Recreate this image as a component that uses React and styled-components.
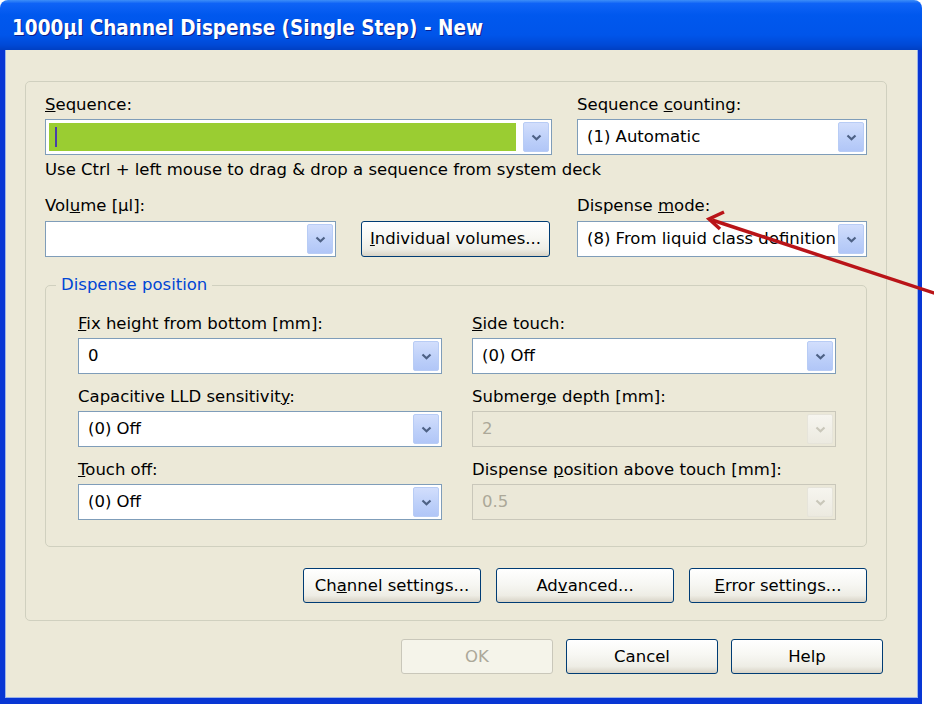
import React from "react";
import styled, { createGlobalStyle } from "styled-components";

const GlobalStyle = createGlobalStyle`
  html, body {
    margin: 0;
    padding: 0;
    background: #ffffff;
  }
  body {
    font-family: "DejaVu Sans", "Liberation Sans", sans-serif;
    font-size: 16.5px;
    color: #000;
  }
`;

const Page = styled.div`
  position: relative;
  display: flex;
  width: 934px;
  height: 704px;
  background: #fff;
  overflow: hidden;
`;

const Window = styled.div`
  width: 922px;
  height: 704px;
  display: flex;
  flex-direction: column;
  border-radius: 8px 8px 0 0;
  overflow: hidden;
`;

const TitleBar = styled.div`
  flex: none;
  height: 50px;
  display: flex;
  align-items: center;
  padding-left: 12px;
  background: linear-gradient(
    to bottom,
    #3d8ef8 0%,
    #0f63f6 7%,
    #0058ee 30%,
    #0055ea 70%,
    #0049d6 90%,
    #003fc2 100%
  );
`;

const Title = styled.div`
  color: #fff;
  font-family: "DejaVu Sans Condensed", "DejaVu Sans", sans-serif;
  font-weight: bold;
  font-size: 20.5px;
  text-shadow: 1px 1px 0 #0a1e8c;
  padding-top: 6px;
`;

const Body = styled.div`
  flex: 1;
  display: flex;
  flex-direction: column;
  background: #ece9d8;
  border-style: solid;
  border-color: #0836d4;
  border-width: 0 4px 6px 5px;
  box-shadow: inset 1px 0 0 #9bb4ea, inset -1px 0 0 #9bb4ea, inset 0 -1px 0 #9bb4ea;
  padding: 31px 31px 0 20px;
`;

const GroupBox = styled.div`
  border: 1px solid #d0d0bf;
  border-radius: 5px;
  padding: 13px 19px 17px 19px;
`;

const TopGrid = styled.div`
  display: grid;
  grid-template-columns: 507px 290px;
  column-gap: 25px;
`;

const Field = styled.div`
  display: flex;
  flex-direction: column;
  gap: ${(p) => p.$gap || 4}px;
`;

const Label = styled.div`
  line-height: 20px;
  white-space: nowrap;
`;

const Hint = styled.div`
  grid-column: 1 / -1;
  line-height: 20px;
  margin: 5px 0 16px;
  white-space: nowrap;
`;

const Combo = styled.div`
  box-sizing: border-box;
  width: ${(p) => (p.$width ? `${p.$width}px` : "100%")};
  height: 36px;
  display: flex;
  align-items: center;
  border: 1px solid ${(p) => (p.$disabled ? "#c9c7ba" : "#7f9db9")};
  background: ${(p) => (p.$disabled ? "#ebe8d8" : "#ffffff")};
  color: ${(p) => (p.$disabled ? "#aca899" : "#000")};
`;

const ComboText = styled.div`
  flex: 1;
  min-width: 0;
  padding-left: 9px;
  white-space: nowrap;
  overflow: hidden;
  line-height: 20px;
`;

const SequenceFill = styled.div`
  flex: 1;
  align-self: stretch;
  margin: 3px 5px 3px 3px;
  background: #9acd32;
  display: flex;
  align-items: center;
  padding-left: 6px;
`;

const Caret = styled.span`
  width: 2px;
  height: 20px;
  background: #4a3fa8;
`;

const DropButton = styled.div`
  flex: none;
  width: 26px;
  align-self: stretch;
  margin: 2px;
  border-radius: 2px;
  display: flex;
  align-items: center;
  justify-content: center;
  background: ${(p) =>
    p.$disabled
      ? "linear-gradient(#f6f5ef, #eceae0)"
      : "linear-gradient(#d2defc, #bccff9 60%, #b1c6f7)"};
  border: 1px solid ${(p) => (p.$disabled ? "#e6e4da" : "#b8ccf5")};
  box-sizing: border-box;
`;

const Chevron = ({ disabled }) => (
  <svg width="11" height="7" viewBox="0 0 11 7">
    <polyline
      points="1.5,1.5 5.5,5.2 9.5,1.5"
      fill="none"
      stroke={disabled ? "#c9c7ba" : "#4d6185"}
      strokeWidth="2.2"
    />
  </svg>
);

const Select = ({ value, width, disabled }) => (
  <Combo $width={width} $disabled={disabled}>
    <ComboText>{value}</ComboText>
    <DropButton $disabled={disabled}>
      <Chevron disabled={disabled} />
    </DropButton>
  </Combo>
);

const VolumeRow = styled.div`
  display: flex;
  align-items: center;
  gap: 25px;
`;

const PushButton = styled.button`
  flex: none;
  box-sizing: border-box;
  width: ${(p) => p.$width}px;
  height: ${(p) => p.$height || 35}px;
  padding: 0;
  border: 1px solid ${(p) => (p.disabled ? "#c9c7ba" : "#003c74")};
  border-radius: 3px;
  background: ${(p) =>
    p.disabled
      ? "#f5f4ea"
      : "linear-gradient(#ffffff, #f7f7f3 45%, #eeede5 80%, #d8d3c6)"};
  color: ${(p) => (p.disabled ? "#aca899" : "#000")};
  font: inherit;
  line-height: 20px;
  white-space: nowrap;
`;

const PositionGroup = styled.div`
  position: relative;
  margin-top: 28px;
  border: 1px solid #d0d0bf;
  border-radius: 5px;
  padding: 28px 31px 26px 32px;
`;

const Legend = styled.div`
  position: absolute;
  top: -11px;
  left: 10px;
  padding: 0 5px;
  line-height: 20px;
  background: #ece9d8;
  color: #0046d5;
`;

const PositionGrid = styled.div`
  display: grid;
  grid-template-columns: 364px 364px;
  column-gap: 30px;
  row-gap: 13px;
`;

const ActionRow = styled.div`
  display: flex;
  justify-content: flex-end;
  gap: 15px;
  margin-top: 21px;
`;

const DialogRow = styled.div`
  display: flex;
  justify-content: flex-end;
  gap: 13px;
  margin: 18px 4px 0 0;
`;

const ArrowLayer = styled.svg`
  position: absolute;
  left: 0;
  top: 0;
  pointer-events: none;
`;

const positionFields = [
  { label: <><u>F</u>ix height from bottom [mm]:</>, value: "0" },
  { label: <><u>S</u>ide touch:</>, value: "(0) Off" },
  { label: <>Capacitive LLD sensitivit<u>y</u>:</>, value: "(0) Off" },
  { label: <>Submer<u>g</u>e depth [mm]:</>, value: "2", disabled: true },
  { label: <><u>T</u>ouch off:</>, value: "(0) Off" },
  { label: <>Dispense <u>p</u>osition above touch [mm]:</>, value: "0.5", disabled: true },
];

export default function App() {
  return (
    <Page>
      <GlobalStyle />
      <Window>
        <TitleBar>
          <Title>1000µl Channel Dispense (Single Step) - New</Title>
        </TitleBar>
        <Body>
          <GroupBox>
            <TopGrid>
              <Field>
                <Label><u>S</u>equence:</Label>
                <Combo>
                  <SequenceFill>
                    <Caret />
                  </SequenceFill>
                  <DropButton>
                    <Chevron />
                  </DropButton>
                </Combo>
              </Field>
              <Field>
                <Label>Sequence <u>c</u>ounting:</Label>
                <Select value="(1) Automatic" />
              </Field>
              <Hint>Use Ctrl + left mouse to drag &amp; drop a sequence from system deck</Hint>
              <Field $gap={5}>
                <Label>Vol<u>u</u>me [µl]:</Label>
                <VolumeRow>
                  <Select width={291} value="" />
                  <PushButton $width={189} $height={36}>
                    <u>I</u>ndividual volumes...
                  </PushButton>
                </VolumeRow>
              </Field>
              <Field $gap={5}>
                <Label>Dispense <u>m</u>ode:</Label>
                <Select value="(8) From liquid class definition" />
              </Field>
            </TopGrid>

            <PositionGroup>
              <Legend>Dispense position</Legend>
              <PositionGrid>
                {positionFields.map((f, i) => (
                  <Field key={i} $gap={4}>
                    <Label>{f.label}</Label>
                    <Select value={f.value} disabled={f.disabled} />
                  </Field>
                ))}
              </PositionGrid>
            </PositionGroup>

            <ActionRow>
              <PushButton $width={178}>Ch<u>a</u>nnel settings...</PushButton>
              <PushButton $width={178}>Ad<u>v</u>anced...</PushButton>
              <PushButton $width={178}><u>E</u>rror settings...</PushButton>
            </ActionRow>
          </GroupBox>

          <DialogRow>
            <PushButton $width={152} disabled>OK</PushButton>
            <PushButton $width={152}>Cancel</PushButton>
            <PushButton $width={152}>Help</PushButton>
          </DialogRow>
        </Body>
      </Window>

      <ArrowLayer width="934" height="704" viewBox="0 0 934 704">
        <line x1="940" y1="295" x2="712" y2="220" stroke="#b91418" strokeWidth="3.5" />
        <polyline
          points="724,212 709,219 720,229"
          fill="none"
          stroke="#b91418"
          strokeWidth="3.5"
          strokeLinejoin="miter"
        />
      </ArrowLayer>
    </Page>
  );
}
